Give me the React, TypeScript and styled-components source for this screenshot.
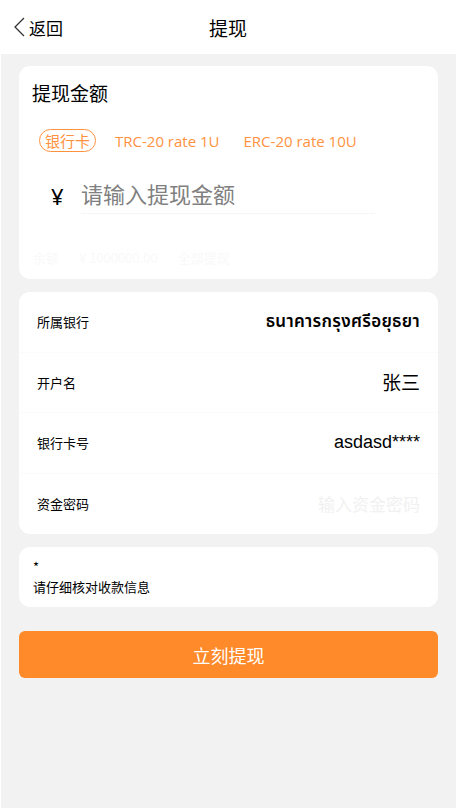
import styled, { createGlobalStyle } from 'styled-components'

const GlobalStyle = createGlobalStyle`
    html, body {
        margin: 0;
        padding: 0;
        background: #ffffff;
        font-family: "Noto Sans", "Noto Sans CJK SC", sans-serif;
        color: #000;
    }
    * {
        box-sizing: border-box;
    }
`

const colors = {
    orange: '#ff8a2a',
    tab: '#ff9240',
    page: '#f2f2f2',
    placeholder: '#808080',
}

const Page = styled.div`
    width: 456px;
    height: 808px;
    display: flex;
    flex-direction: column;
    background: #fff;
`

const Header = styled.div`
    height: 54px;
    display: grid;
    grid-template-columns: 1fr auto 1fr;
    align-items: center;
    background: #fff;
`

const Back = styled.div`
    display: flex;
    align-items: center;
    gap: 3px;
    padding-left: 13px;
    font-size: 17px;
    font-family: "Noto Sans CJK SC", sans-serif;
`

const Title = styled.div`
    font-size: 19px;
    font-family: "Noto Sans CJK SC", sans-serif;
`

const Body = styled.div`
    flex: 1;
    margin-left: 1px;
    background: ${colors.page};
    padding: 12px 18px 0 18px;
    display: flex;
    flex-direction: column;
    gap: 13px;
`

const Card = styled.div<{ $pad?: string }>`
    background: #fff;
    border-radius: 11px;
    padding: ${(p) => p.$pad || '0'};
`

const CardTitle = styled.div`
    font-size: 19px;
    font-family: "Noto Sans CJK SC", sans-serif;
    line-height: 26px;
    margin-left: -1px;
`

const Tabs = styled.div`
    display: flex;
    align-items: center;
    gap: 14px;
    margin-top: 23px;
    padding-left: 6px;
`

const Tab = styled.div<{ $active?: boolean }>`
    color: ${colors.tab};
    font-size: 15px;
    line-height: 20px;
    height: 23px;
    display: flex;
    align-items: center;
    padding: 0 5px;
    border: ${(p) => (p.$active ? `1px solid ${colors.tab}` : 'none')};
    border-radius: 12px;
    font-family: ${(p) => (p.$active ? '"Noto Sans CJK SC", sans-serif' : '"Open Sans", "Noto Sans CJK SC", sans-serif')};
`

const AmountRow = styled.div`
    display: flex;
    align-items: center;
    margin-top: 20px;
    padding-left: 18px;
`

const Yen = styled.div`
    font-size: 22px;
    width: 30px;
    padding-top: 6px;
`

const AmountInput = styled.div`
    width: 294px;
    height: 42px;
    display: flex;
    align-items: center;
    border-bottom: 1px solid #f6f6f6;
    color: ${colors.placeholder};
    font-size: 22px;
    font-family: "Noto Sans CJK SC", sans-serif;
`

const Faint = styled.div`
    display: flex;
    gap: 20px;
    margin-top: 34px;
    font-size: 13px;
    color: #f9f9f9;
    font-family: "Noto Sans CJK SC", sans-serif;
`

const InfoRow = styled.div<{ $last?: boolean }>`
    height: 60.5px;
    display: flex;
    align-items: center;
    justify-content: space-between;
    padding: 0 18px 0 18px;
    border-bottom: ${(p) => (p.$last ? 'none' : '1px solid #fbfbfb')};
`

const Label = styled.div`
    font-size: 13px;
    font-family: "Noto Sans CJK SC", sans-serif;
`

const Value = styled.div<{ $muted?: boolean; $size?: number; $bold?: boolean; $latin?: boolean }>`
    font-size: ${(p) => p.$size || 17}px;
    font-weight: ${(p) => (p.$bold ? 600 : 400)};
    color: ${(p) => (p.$muted ? '#f1f1f1' : '#000')};
    font-family: ${(p) =>
        p.$latin ? '"Liberation Sans", sans-serif' : '"Noto Sans", "Noto Sans Thai", "Noto Sans CJK SC", sans-serif'};
    letter-spacing: ${(p) => (p.$bold ? '0.3px' : '0')};
`

const Note = styled.div`
    font-size: 13px;
    line-height: 20px;
    font-family: "Noto Sans CJK SC", sans-serif;
`

const Submit = styled.button`
    margin-top: 11px;
    height: 47px;
    border: none;
    border-radius: 6px;
    background: ${colors.orange};
    color: #fff;
    font-size: 18px;
    font-family: "Noto Sans CJK SC", sans-serif;
`

function App() {
    return (
        <Page>
            <GlobalStyle />
            <Header>
                <Back>
                    <svg width="13" height="22" viewBox="0 0 13 22" fill="none">
                        <path d="M11 2 L2 11 L11 20" stroke="#333" strokeWidth="1.3" />
                    </svg>
                    返回
                </Back>
                <Title>提现</Title>
                <div />
            </Header>
            <Body>
                <Card $pad="14px 14px 12px 14px">
                    <CardTitle>提现金额</CardTitle>
                    <Tabs>
                        <Tab $active>银行卡</Tab>
                        <Tab>TRC-20 rate 1U</Tab>
                        <Tab>ERC-20 rate 10U</Tab>
                    </Tabs>
                    <AmountRow>
                        <Yen>¥</Yen>
                        <AmountInput>请输入提现金额</AmountInput>
                    </AmountRow>
                    <Faint>
                        <span>余额</span>
                        <span>¥ 1000000.00</span>
                        <span>全部提现</span>
                    </Faint>
                </Card>
                <Card>
                    <InfoRow>
                        <Label>所属银行</Label>
                        <Value $bold>ธนาคารกรุงศรีอยุธยา</Value>
                    </InfoRow>
                    <InfoRow>
                        <Label>开户名</Label>
                        <Value $size={19}>张三</Value>
                    </InfoRow>
                    <InfoRow>
                        <Label>银行卡号</Label>
                        <Value $latin $size={18}>asdasd****</Value>
                    </InfoRow>
                    <InfoRow $last>
                        <Label>资金密码</Label>
                        <Value $muted>输入资金密码</Value>
                    </InfoRow>
                </Card>
                <Card $pad="10px 14px 10px 14px">
                    <Note>*</Note>
                    <Note>请仔细核对收款信息</Note>
                </Card>
                <Submit>立刻提现</Submit>
            </Body>
        </Page>
    )
}

export default App
